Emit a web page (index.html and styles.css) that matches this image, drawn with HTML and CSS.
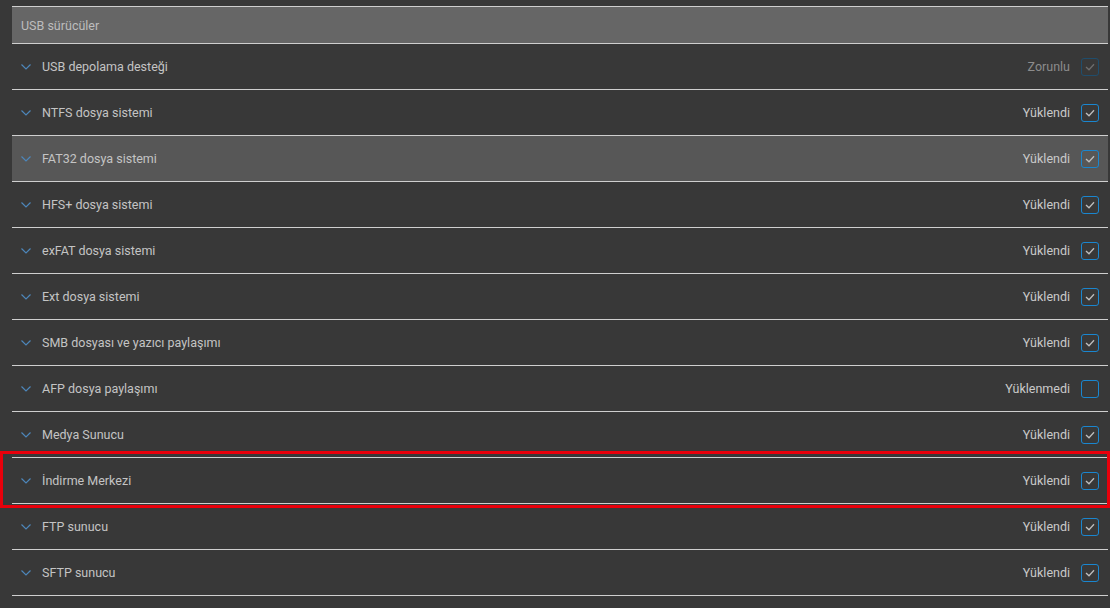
FILE: index.html
```html
<!DOCTYPE html>
<html lang="tr">
<head>
    <meta charset="UTF-8">
    <title>USB sürücüler</title>
    <link rel="stylesheet" href="styles.css">
</head>
<body>
    <div class="panel">
        <!-- başlık -->
        <div class="panel-head">USB sürücüler</div>

        <div class="row">
            <span class="chev"><svg width="10" height="6" viewBox="0 0 10 6"><path d="M0.5 0.5 L5 5 L9.5 0.5" fill="none" stroke="currentColor" stroke-width="1.2"/></svg></span>
            <span class="name">USB depolama desteği</span>
            <span class="state muted">Zorunlu</span>
            <span class="box locked"><svg width="10" height="8" viewBox="0 0 10 8"><path d="M1 4 L4 6.8 L9 1.2" fill="none" stroke="currentColor" stroke-width="1.3"/></svg></span>
        </div>
        <div class="row">
            <span class="chev"><svg width="10" height="6" viewBox="0 0 10 6"><path d="M0.5 0.5 L5 5 L9.5 0.5" fill="none" stroke="currentColor" stroke-width="1.2"/></svg></span>
            <span class="name">NTFS dosya sistemi</span>
            <span class="state">Yüklendi</span>
            <span class="box"><svg width="10" height="8" viewBox="0 0 10 8"><path d="M1 4 L4 6.8 L9 1.2" fill="none" stroke="currentColor" stroke-width="1.3"/></svg></span>
        </div>
        <div class="row hover">
            <span class="chev"><svg width="10" height="6" viewBox="0 0 10 6"><path d="M0.5 0.5 L5 5 L9.5 0.5" fill="none" stroke="currentColor" stroke-width="1.2"/></svg></span>
            <span class="name">FAT32 dosya sistemi</span>
            <span class="state">Yüklendi</span>
            <span class="box"><svg width="10" height="8" viewBox="0 0 10 8"><path d="M1 4 L4 6.8 L9 1.2" fill="none" stroke="currentColor" stroke-width="1.3"/></svg></span>
        </div>
        <div class="row">
            <span class="chev"><svg width="10" height="6" viewBox="0 0 10 6"><path d="M0.5 0.5 L5 5 L9.5 0.5" fill="none" stroke="currentColor" stroke-width="1.2"/></svg></span>
            <span class="name">HFS+ dosya sistemi</span>
            <span class="state">Yüklendi</span>
            <span class="box"><svg width="10" height="8" viewBox="0 0 10 8"><path d="M1 4 L4 6.8 L9 1.2" fill="none" stroke="currentColor" stroke-width="1.3"/></svg></span>
        </div>
        <div class="row">
            <span class="chev"><svg width="10" height="6" viewBox="0 0 10 6"><path d="M0.5 0.5 L5 5 L9.5 0.5" fill="none" stroke="currentColor" stroke-width="1.2"/></svg></span>
            <span class="name">exFAT dosya sistemi</span>
            <span class="state">Yüklendi</span>
            <span class="box"><svg width="10" height="8" viewBox="0 0 10 8"><path d="M1 4 L4 6.8 L9 1.2" fill="none" stroke="currentColor" stroke-width="1.3"/></svg></span>
        </div>
        <div class="row">
            <span class="chev"><svg width="10" height="6" viewBox="0 0 10 6"><path d="M0.5 0.5 L5 5 L9.5 0.5" fill="none" stroke="currentColor" stroke-width="1.2"/></svg></span>
            <span class="name">Ext dosya sistemi</span>
            <span class="state">Yüklendi</span>
            <span class="box"><svg width="10" height="8" viewBox="0 0 10 8"><path d="M1 4 L4 6.8 L9 1.2" fill="none" stroke="currentColor" stroke-width="1.3"/></svg></span>
        </div>
        <div class="row">
            <span class="chev"><svg width="10" height="6" viewBox="0 0 10 6"><path d="M0.5 0.5 L5 5 L9.5 0.5" fill="none" stroke="currentColor" stroke-width="1.2"/></svg></span>
            <span class="name">SMB dosyası ve yazıcı paylaşımı</span>
            <span class="state">Yüklendi</span>
            <span class="box"><svg width="10" height="8" viewBox="0 0 10 8"><path d="M1 4 L4 6.8 L9 1.2" fill="none" stroke="currentColor" stroke-width="1.3"/></svg></span>
        </div>
        <div class="row">
            <span class="chev"><svg width="10" height="6" viewBox="0 0 10 6"><path d="M0.5 0.5 L5 5 L9.5 0.5" fill="none" stroke="currentColor" stroke-width="1.2"/></svg></span>
            <span class="name">AFP dosya paylaşımı</span>
            <span class="state">Yüklenmedi</span>
            <span class="box"></span>
        </div>
        <div class="row">
            <span class="chev"><svg width="10" height="6" viewBox="0 0 10 6"><path d="M0.5 0.5 L5 5 L9.5 0.5" fill="none" stroke="currentColor" stroke-width="1.2"/></svg></span>
            <span class="name">Medya Sunucu</span>
            <span class="state">Yüklendi</span>
            <span class="box"><svg width="10" height="8" viewBox="0 0 10 8"><path d="M1 4 L4 6.8 L9 1.2" fill="none" stroke="currentColor" stroke-width="1.3"/></svg></span>
        </div>
        <!-- işaretli satır -->
        <div class="row marked">
            <span class="chev"><svg width="10" height="6" viewBox="0 0 10 6"><path d="M0.5 0.5 L5 5 L9.5 0.5" fill="none" stroke="currentColor" stroke-width="1.2"/></svg></span>
            <span class="name">İndirme Merkezi</span>
            <span class="state">Yüklendi</span>
            <span class="box"><svg width="10" height="8" viewBox="0 0 10 8"><path d="M1 4 L4 6.8 L9 1.2" fill="none" stroke="currentColor" stroke-width="1.3"/></svg></span>
        </div>
        <div class="row">
            <span class="chev"><svg width="10" height="6" viewBox="0 0 10 6"><path d="M0.5 0.5 L5 5 L9.5 0.5" fill="none" stroke="currentColor" stroke-width="1.2"/></svg></span>
            <span class="name">FTP sunucu</span>
            <span class="state">Yüklendi</span>
            <span class="box"><svg width="10" height="8" viewBox="0 0 10 8"><path d="M1 4 L4 6.8 L9 1.2" fill="none" stroke="currentColor" stroke-width="1.3"/></svg></span>
        </div>
        <div class="row">
            <span class="chev"><svg width="10" height="6" viewBox="0 0 10 6"><path d="M0.5 0.5 L5 5 L9.5 0.5" fill="none" stroke="currentColor" stroke-width="1.2"/></svg></span>
            <span class="name">SFTP sunucu</span>
            <span class="state">Yüklendi</span>
            <span class="box"><svg width="10" height="8" viewBox="0 0 10 8"><path d="M1 4 L4 6.8 L9 1.2" fill="none" stroke="currentColor" stroke-width="1.3"/></svg></span>
        </div>
    </div>
</body>
</html>
```

FILE: styles.css
```css
/* 기본 */
* {
    margin: 0;
    padding: 0;
    box-sizing: border-box;
}

html, body {
    width: 100%;
    height: 100%;
    background-color: #383838;
    font-family: Roboto, 'Noto Sans', sans-serif;
    font-size: 12.5px;
    overflow: hidden;
}

.panel {
    padding: 6px 2px 0 12px;
}

/* 헤더 */
.panel-head {
    height: 38px;
    display: flex;
    align-items: center;
    padding-left: 9px;
    background-color: #666666;
    border-top: 1px solid #cfcfcf;
    border-bottom: 1px solid #cfcfcf;
    color: #bdbdbd;
}

/* 행 */
.row {
    height: 46px;
    display: flex;
    align-items: center;
    padding: 0 9px 0 9px;
    border-bottom: 1px solid #cfcfcf;
    color: #c4c4c4;
    position: relative;
}

.row.hover {
    background-color: #575757;
}

.chev {
    width: 21px;
    display: flex;
    align-items: center;
    color: #4d86ba;
    padding-top: 1px;
}

.name {
    flex: 1;
}

.state {
    margin-right: 11px;
    color: #cacaca;
}

.state.muted {
    color: #8c8c8c;
}

.box {
    width: 18px;
    height: 18px;
    border: 1px solid #1a86cf;
    border-radius: 3px;
    display: flex;
    align-items: center;
    justify-content: center;
    color: #bdbdbd;
}

.box.locked {
    border-color: #1f4d6c;
    color: #6d6d6d;
}

/* 빨간 표시 */
.row.marked::after {
    content: "";
    position: absolute;
    left: -12px;
    right: -2px;
    top: -7px;
    height: 51px;
    border: 3px solid #e8000b;
}
```
